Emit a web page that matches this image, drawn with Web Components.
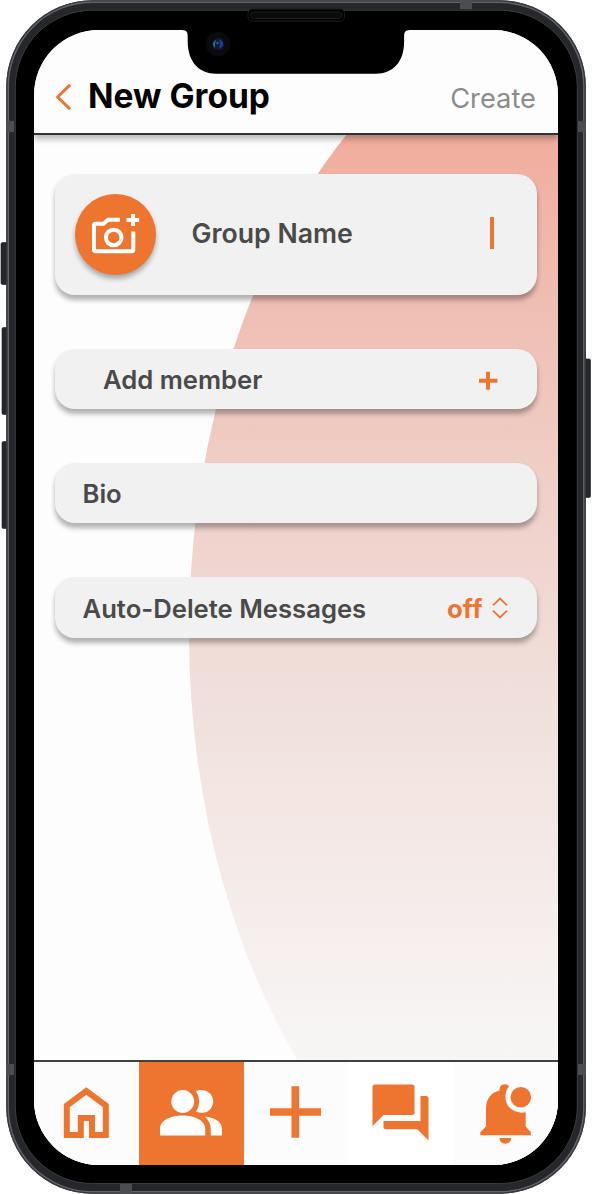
<!DOCTYPE html>
<html lang="en">
<head>
<meta charset="utf-8">
<title>New Group</title>
<style>
html,body{margin:0;background:#fff}
body{font-family:Inter,"Liberation Sans",sans-serif;width:592px;height:1194px;overflow:hidden}
</style>
</head>
<body>
<phone-frame>
  <app-screen>
    <app-header slot="header" heading="New Group" action="Create"></app-header>
    <form-card style="--h:121px;--pad:0 43.5px 0 20.5px;--size:26.7px;--lift:6px">
      <photo-button slot="start"></photo-button>
      <span>Group Name</span>
      <text-caret slot="end"></text-caret>
    </form-card>
    <form-card style="--h:60.5px;--pad:0 39.5px 0 48.5px">
      <span>Add member</span>
      <svg slot="end" width="20" height="20" viewBox="0 0 20 20"><path d="M10 1.8v17.9M1 10.8h18.4" stroke="#ed752f" stroke-width="4"/></svg>
    </form-card>
    <form-card style="--h:60.5px;--pad:0 28px;--lift:1px">
      <span>Bio</span>
    </form-card>
    <form-card style="--h:60.5px;--pad:0 29px 0 28px">
      <span>Auto-Delete Messages</span>
      <value-picker slot="end">off</value-picker>
    </form-card>
    <tab-bar slot="footer">
      <tab-item><svg width="105" height="103" viewBox="34 1062 105 103"><path fill="none" stroke="#ed752f" stroke-width="6" d="M66.8 1135V1105.5L86.300 1091 105.800 1105.500V1135H92.000V1118H80.800V1135Z"/></svg></tab-item>
      <tab-item active><svg width="105" height="103" viewBox="139 1062 105 103" fill="#fff"><circle cx="182.700" cy="1101.500" r="11.400"/><path d="M160 1135.500v-6.500c0-9 11-13.500 22.500-13.500s22.800 4.500 22.800 13.500v6.500zM196 1090.900q4-1.600 7.500-.6a11.300 11.300 0 0 1 0 22.400q-4 .5-7.500-1.200q6.500-10 0-20.600zM204.500 1116.500c9 1 17.500 4.500 17.500 12.500v6.500h-11.200v-6.500q0-7.500-6.300-12.500z"/></svg></tab-item>
      <tab-item><svg width="105" height="103" viewBox="244 1062 105 103"><path stroke="#ed752f" stroke-width="7.600" d="M295.300 1086.300v51.500M270 1112h51"/></svg></tab-item>
      <tab-item bright><svg width="105" height="103" viewBox="348.500 1062 105 103" fill="#ed752f"><path d="M375.500 1084.500h37q2.500 0 2.500 2.500v25.500q0 2.500-2.500 2.500h-28.500l-11 11.300v-39.300q0-2.500 2.500-2.500zM421 1096h5.500q2.500 0 2.500 2.500v42l-11.200-11.200h-31.300q-2.500 0-2.500-2.500v-5.800h37z"/></svg></tab-item>
      <tab-item><svg width="105" height="103" viewBox="453.500 1062 105 103" fill="#ed752f"><path d="M480.800 1135.300v-3l5.700-5.700v-18c0-9.500 5-16 13.500-18v-1c0-6 7-7 9.700-3.300-5.500 6-5 17 1.500 22.300q6.300 5.300 15 3.700v14.300l5.200 5.700v3zM500 1138h11.700c0 7.500-11.700 7.500-11.700 0z"/><circle cx="521.300" cy="1097.300" r="10.300"/></svg></tab-item>
    </tab-bar>
  </app-screen>
</phone-frame>

<script>
const define = (name, html) => {
  const t = document.createElement('template');
  t.innerHTML = html;
  customElements.define(name, class extends HTMLElement {
    constructor() {
      super();
      this.attachShadow({ mode: 'open' }).append(t.content.cloneNode(true));
    }
    connectedCallback() {
      this.shadowRoot.querySelectorAll('[data-text]').forEach(e => {
        e.textContent = this.getAttribute(e.dataset.text) || '';
      });
    }
  });
};

define('phone-frame', `
<style>
:host{display:block;position:relative;box-sizing:border-box;width:592px;height:1194px;padding:30px 34px}
svg{position:absolute;inset:0}
.screen{position:relative;height:1134.500px;width:524px;border-radius:65px;overflow:hidden}
</style>
<svg width="592" height="1194" viewBox="0 0 592 1194">
  <g fill="#25282b" stroke="#141618" stroke-width=".6">
    <rect x="1" y="242.500" width="8" height="42" rx="1.500"/>
    <rect x="2" y="327.500" width="8" height="87" rx="1.500"/>
    <rect x="2" y="441.500" width="8" height="87" rx="1.500"/>
    <rect x="583" y="359" width="7.500" height="138.500" rx="1.500"/>
  </g>
  <rect x="6.300" y=".3" width="579.500" height="1193.400" rx="86" fill="#25272b"/>
  <rect x="6.800" y=".8" width="578.500" height="1192.400" rx="85.500" fill="none" stroke="#3c3e42"/>
  <rect x="8.300" y="2.300" width="575.500" height="1189.400" rx="84" fill="none" stroke="#63656a" stroke-width="1.400"/>
  <g fill="#4b4d51"><rect x="460" y="0" width="12" height="9"/><rect x="120" y="1184" width="12" height="10"/><rect x="6" y="121" width="8" height="11"/><rect x="578" y="121" width="8" height="11"/><rect x="6" y="1064" width="8" height="11"/><rect x="578" y="1064" width="8" height="11"/></g>
  <rect x="15.300" y="10.300" width="562" height="1173.200" rx="77" fill="#000" stroke="#3a3c40"/>
</svg>
<div class="screen"><slot></slot></div>
<svg width="592" height="1194" viewBox="0 0 592 1194">
  <path d="M182 29H410V30C405 30.500 404.300 32 404.100 36V42C404 62 393 73.700 376 73.700H216C199 73.700 188 62 187.700 42V36C187.500 32 187 30.500 182 30Z"/>
  <rect x="248" y="9" width="96.500" height="12" rx="4.500" fill="#000" stroke="#1e1e1f"/>
  <rect x="250.500" y="12" width="91.500" height="6.500" rx="3.200" fill="#0b0b0c" stroke="#1c1c1c"/>
  <circle cx="218" cy="44" r="12" fill="#0b0b0d"/>
  <circle cx="218" cy="44" r="6" fill="#101a38"/>
  <path d="M219 39.500q4 1 4 4.500t-4 4.500q2-4.500 0-9z" fill="#213c9b"/>
  <path d="M216 40q-3 1.500-3 4t2 4q-.5-4 1-8z" fill="#347272"/>
  <circle cx="217.500" cy="43" r="1.300" fill="#38569c"/>
</svg>`);

define('app-screen', `
<style>
:host{display:flex;flex-direction:column;height:100%;position:relative;background:#fdfdfd}
.glow{position:absolute;left:0;top:0}
main{flex:1;display:flex;flex-direction:column;gap:53.700px;padding:39px 21px 0 20.500px;position:relative}
slot[name=header],slot[name=footer]{display:block;position:relative}
</style>
<svg class="glow" width="524" height="1134" viewBox="34 30 524 1134">
  <defs><linearGradient id="g" gradientUnits="userSpaceOnUse" x1="0" y1="134" x2="0" y2="1060">
    <stop offset="0" stop-color="#f1ad9d"/><stop offset=".2" stop-color="#efbfb5"/><stop offset=".33" stop-color="#efcbc2"/><stop offset=".47" stop-color="#f0d6d0"/><stop offset=".6" stop-color="#f0dfdb"/><stop offset=".82" stop-color="#f5ecea"/><stop offset="1" stop-color="#f7f6f5"/>
  </linearGradient></defs>
  <ellipse cx="639" cy="633" rx="450" ry="656" fill="url(#g)"/>
</svg>
<slot name="header"></slot>
<main><slot></slot></main>
<slot name="footer"></slot>`);

define('app-header', `
<style>
:host{display:flex;box-sizing:border-box;height:105px;align-items:flex-start;padding:46px 22px 0 21px;background:#fdfdfd;border-bottom:2px solid #303234;box-shadow:0 4px 6px rgba(0,0,0,.28)}
svg{margin-top:7px;flex:none}
h1{margin:0 auto 0 16px;font-size:33.500px;line-height:40px;font-weight:700;color:#000;white-space:nowrap}
span{font-size:27.300px;line-height:34px;color:#8c8c8c;margin-top:6px}
</style>
<svg width="17" height="28" viewBox="0 0 17 28"><path d="M14.300 2.700L2.500 14l11.800 11.300" fill="none" stroke="#ed752f" stroke-width="3" stroke-linecap="round" stroke-linejoin="round"/></svg>
<h1 data-text="heading"></h1><span data-text="action"></span>`);

define('form-card', `
<style>
:host{display:flex;align-items:center;box-sizing:border-box;height:var(--h);padding:var(--pad);border-radius:20px;background:#f1f1f1;box-shadow:0 4.500px 5px rgba(0,0,0,.3);font-size:var(--size,25.650px);font-weight:600;color:#4a4a4a;white-space:nowrap}
.label{flex:1;padding-top:2px;padding-bottom:var(--lift,0px)}
::slotted(photo-button){margin-right:35.500px}
::slotted(svg){margin-top:3px}
</style>
<slot name="start"></slot><div class="label"><slot></slot></div><slot name="end"></slot>`);

define('photo-button', `
<style>
:host{display:block;width:81px;height:81px;border-radius:50%;background:#ed752f;box-shadow:0 4px 5px rgba(0,0,0,.3)}
svg{display:block}
</style>
<svg width="81" height="81" viewBox="75 194 81 81" fill="none" stroke="#fff" stroke-width="4">
  <path d="M120 219.800H108L103.500 223.700H95.500Q94 223.700 94 225.500V249.500Q94 251.300 95.800 251.300H131.500Q133.300 251.300 133.300 249.500V231.500"/>
  <circle cx="113.700" cy="237.500" r="7.800"/>
  <path d="M133 213.900V226M126.500 220H139.200"/>
</svg>`);

define('text-caret', `
<style>:host{display:block;width:3.300px;height:32px;background:#ed752f;margin-top:-4px}</style>`);

define('value-picker', `
<style>
:host{display:flex;align-items:center;color:#ed752f;gap:9.500px;padding-top:2px;font-size:25.650px;letter-spacing:.15px;font-weight:650;font-feature-settings:"calt" 0,"liga" 0}
svg{display:block;margin-top:-1px}
</style>
<slot></slot>
<svg width="16" height="22" viewBox="0 0 16 22" fill="none" stroke="#ed752f" stroke-width="1.800"><path d="M1 8.300L8 1.500l7 6.800M1 13.700l7 6.800 7-6.800"/></svg>`);

define('tab-bar', `
<style>:host{display:grid;grid-template-columns:repeat(5,1fr);height:103px;border-top:2px solid #414141;background:#fdfdfd}</style>
<slot></slot>`);

define('tab-item', `
<style>
:host{display:flex;justify-content:center;overflow:hidden;background:#fcfcfc}
:host([active]){background:#ed752f}
:host([bright]){background:#fff}
::slotted(svg){flex:none}
</style>
<slot></slot>`);
</script>
</body>
</html>
